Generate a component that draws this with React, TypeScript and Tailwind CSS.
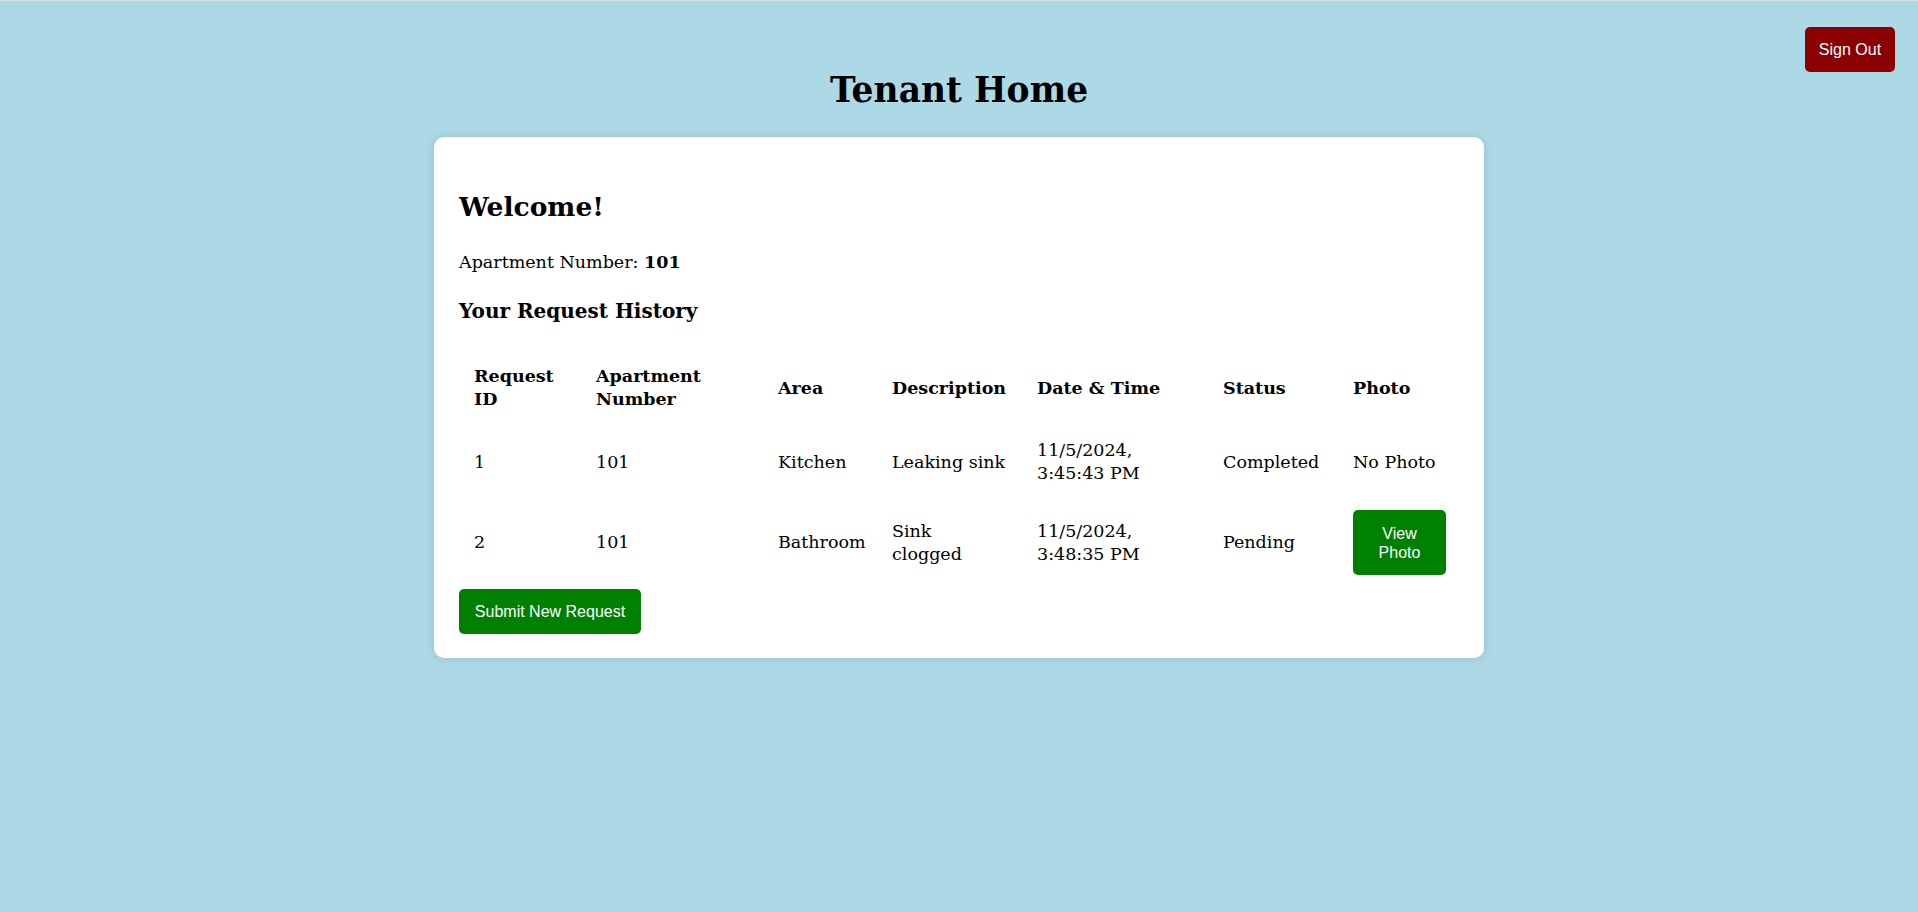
import React from 'react';

type Request = {
  id: number;
  apartment: string;
  area: string;
  description: React.ReactNode;
  date: React.ReactNode;
  status: string;
  hasPhoto: boolean;
};

const requests: Request[] = [
  {
    id: 1,
    apartment: '101',
    area: 'Kitchen',
    description: 'Leaking sink',
    date: (
      <>
        11/5/2024,
        <br />
        3:45:43 PM
      </>
    ),
    status: 'Completed',
    hasPhoto: false,
  },
  {
    id: 2,
    apartment: '101',
    area: 'Bathroom',
    description: (
      <>
        Sink
        <br />
        clogged
      </>
    ),
    date: (
      <>
        11/5/2024,
        <br />
        3:48:35 PM
      </>
    ),
    status: 'Pending',
    hasPhoto: true,
  },
];

const colWidths = [122, 182, 114, 145, 186, 130, 121];

const th = 'whitespace-nowrap pl-[15px] pr-[5px] py-[14px] align-middle font-bold';

export default function App() {
  return (
    <div className="relative min-h-screen border-t border-[#d3e3e7] bg-[#add8e6] font-['DejaVu_Serif',serif] text-black">
      <button
        type="button"
        className="absolute right-[23px] top-[26px] flex h-[45px] w-[90px] items-center justify-center rounded-[5px] bg-[#8b0000] font-['Liberation_Sans',Arial,sans-serif] text-[16px] text-white"
      >
        Sign Out
      </button>

      <h1 className="mt-[69px] text-center text-[34.5px] font-bold leading-[40px]">Tenant Home</h1>

      <div className="mx-auto mt-[27px] w-[1050px] rounded-[10px] bg-white px-[25px] pb-[24px] pt-[25px] shadow-[0_0_10px_rgba(0,0,0,0.12)]">
        <h2 className="mt-[30px] text-[26.5px] font-bold leading-[30px]">Welcome!</h2>

        <p className="mt-[28px] text-[17.5px] leading-[24px]">
          Apartment Number: <strong>101</strong>
        </p>

        <h3 className="mt-[25px] text-[20px] font-bold leading-[24px]">Your Request History</h3>

        {/* Request table */}
        <table className="mt-[28px] w-[1000px] table-fixed border-collapse text-left text-[17.5px] leading-[23px]">
          <colgroup>
            {colWidths.map((w, i) => (
              <col key={i} style={{ width: w }} />
            ))}
          </colgroup>
          <thead>
            <tr>
              <th className={th}>
                Request
                <br />
                ID
              </th>
              <th className={th}>
                Apartment
                <br />
                Number
              </th>
              <th className={th}>Area</th>
              <th className={th}>Description</th>
              <th className={th}>Date &amp; Time</th>
              <th className={th}>Status</th>
              <th className={th}>Photo</th>
            </tr>
          </thead>
          <tbody>
            {requests.map((r) => {
              const cell = r.hasPhoto
                ? 'whitespace-nowrap pl-[15px] pr-[5px] py-[11px] align-middle'
                : 'whitespace-nowrap pl-[15px] pr-[5px] py-[14px] align-middle';
              return (
                <tr key={r.id}>
                  <td className={cell}>{r.id}</td>
                  <td className={cell}>{r.apartment}</td>
                  <td className={cell}>{r.area}</td>
                  <td className={cell}>{r.description}</td>
                  <td className={cell}>{r.date}</td>
                  <td className={cell}>{r.status}</td>
                  <td className={cell}>
                    {r.hasPhoto ? (
                      <button
                        type="button"
                        className="flex h-[65px] w-[93px] items-center justify-center rounded-[5px] bg-[#008000] text-center font-['Liberation_Sans',Arial,sans-serif] text-[16px] leading-[19px] text-white"
                      >
                        View
                        <br />
                        Photo
                      </button>
                    ) : (
                      'No Photo'
                    )}
                  </td>
                </tr>
              );
            })}
          </tbody>
        </table>

        <button
          type="button"
          className="mt-[3px] flex h-[45px] w-[182px] items-center justify-center rounded-[5px] bg-[#008000] font-['Liberation_Sans',Arial,sans-serif] text-[16px] text-white"
        >
          Submit New Request
        </button>
      </div>
    </div>
  );
}
